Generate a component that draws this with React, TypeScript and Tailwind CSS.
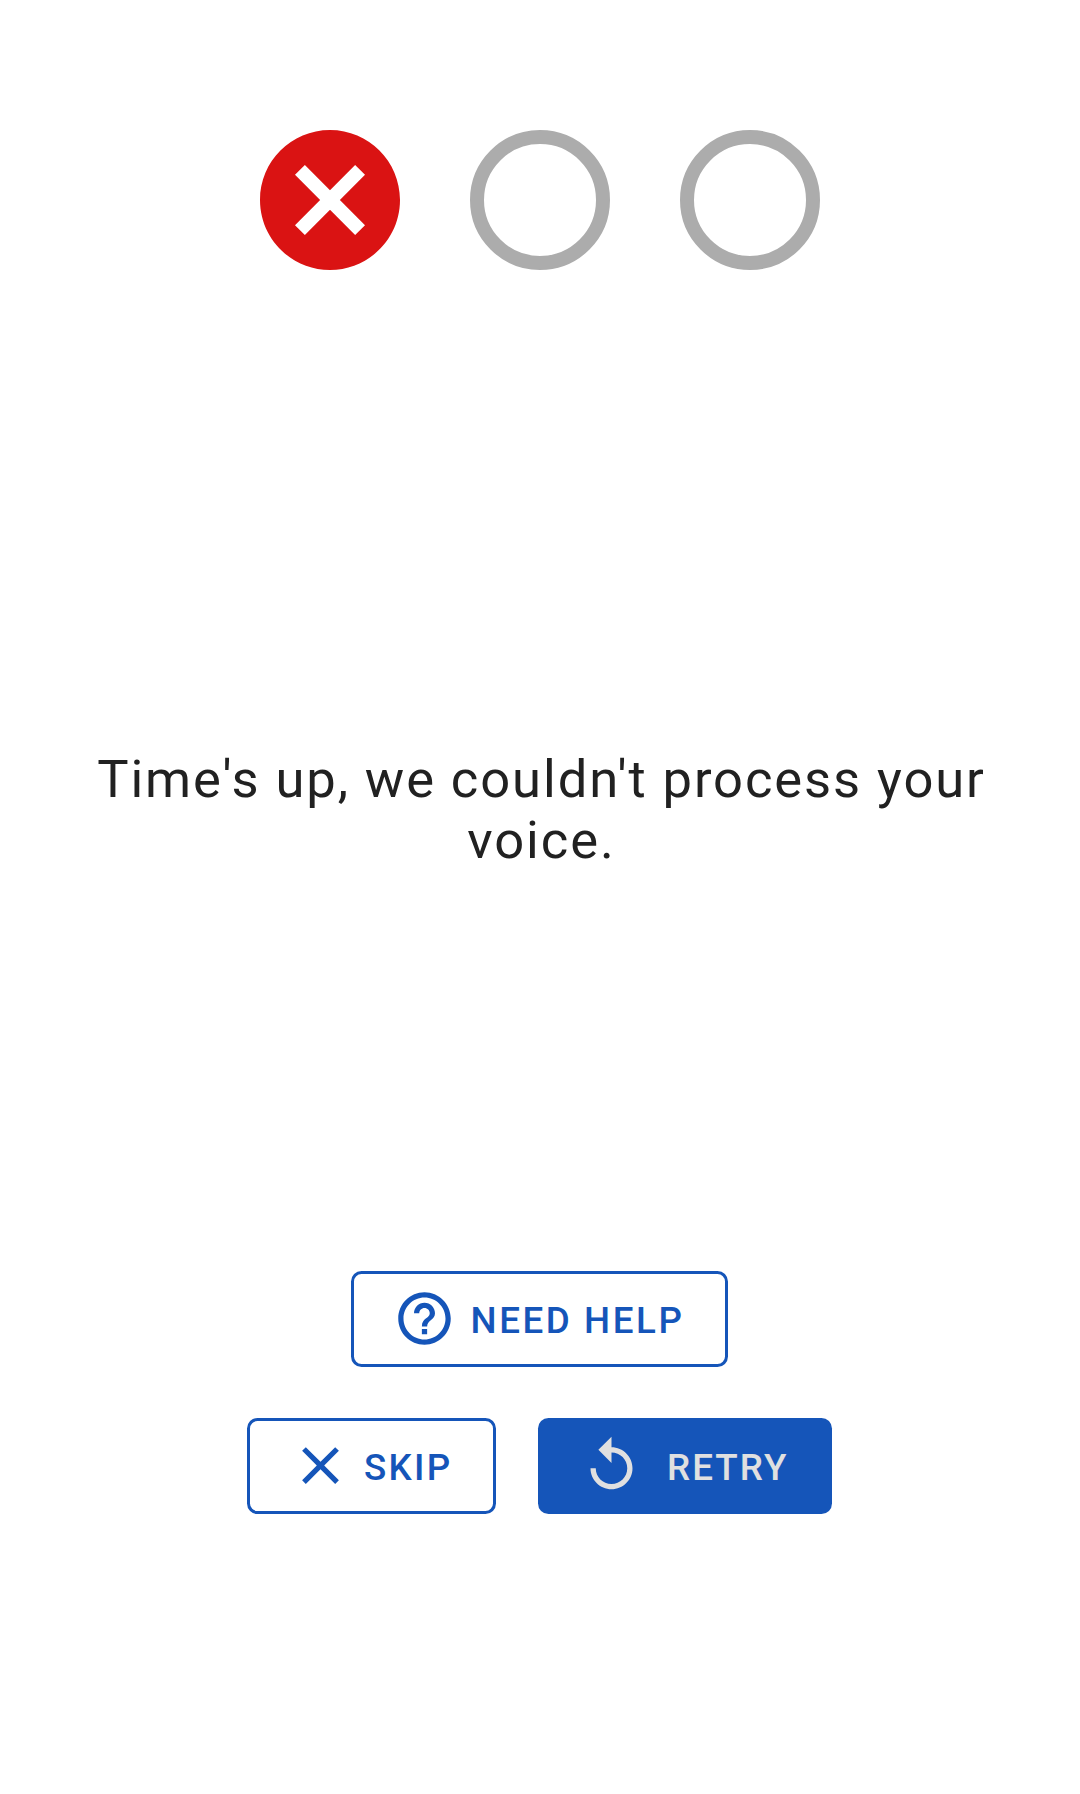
import type { ReactNode } from "react";

const HELP =
  "M11 18h2v-2h-2v2zm1-16C6.48 2 2 6.48 2 12s4.48 10 10 10 10-4.48 10-10S17.52 2 12 2zm0 18c-4.41 0-8-3.59-8-8s3.59-8 8-8 8 3.59 8 8-3.59 8-8 8zm0-14c-2.21 0-4 1.79-4 4h2c0-1.1.9-2 2-2s2 .9 2 2c0 2-3 1.75-3 5h2c0-2.25 3-2.5 3-5 0-2.21-1.79-4-4-4z";
const CLOSE =
  "M19 6.41L17.59 5 12 10.59 6.41 5 5 6.41 10.59 12 5 17.59 6.41 19 12 13.41 17.59 19 19 17.59 13.41 12z";
const REPLAY =
  "M12 5V1L7 6l5 5V7c3.31 0 6 2.69 6 6s-2.69 6-6 6-6-2.69-6-6H4c0 4.42 3.58 8 8 8s8-3.58 8-8-3.58-8-8-8z";
const CANCEL =
  "M12 2C6.47 2 2 6.47 2 12s4.47 10 10 10 10-4.47 10-10S17.53 2 12 2zm5 13.59L15.59 17 12 13.41 8.41 17 7 15.59 10.59 12 7 8.41 8.41 7 12 10.59 15.59 7 17 8.41 13.41 12 17 15.59z";

function ButtonIcon({ d }: { d: string }) {
  return (
    <svg viewBox="0 0 24 24" className="mb-px size-[63px] shrink-0" fill="currentColor" aria-hidden="true">
      <path d={d} />
    </svg>
  );
}

function ActionButton({ className, children }: { className: string; children: ReactNode }) {
  return (
    <button
      type="button"
      className={`flex h-24 items-center rounded-[10.5px] text-[36.75px] leading-[43px] font-medium whitespace-nowrap ${className}`}
    >
      {children}
    </button>
  );
}

export default function App() {
  return (
    <main className="flex h-[1794px] w-[1080px] flex-col items-center overflow-hidden bg-white pt-[130px] font-[Roboto,sans-serif]">
      <div className="flex h-[140px] shrink-0 gap-[70px]">
        <svg viewBox="2 2 20 20" className="size-[140px] text-[#da1313]" fill="currentColor" role="img" aria-label="Failed attempt">
          <path d={CANCEL} />
        </svg>
        <div className="size-[140px] rounded-full border-[14px] border-[#acacac]" />
        <div className="size-[140px] rounded-full border-[14px] border-[#acacac]" />
      </div>

      <p className="mt-[479px] ml-[3px] w-[960px] text-center text-[52.5px] leading-[61px] tracking-[1.91px] text-[#212121]">
        Time's up, we couldn't process your voice.
      </p>

      <div className="mt-[400px] mr-px flex flex-col items-center gap-[51px]">
        <ActionButton className="w-[377px] border-3 border-[#1555b9] pl-[39px] tracking-[2.58px] text-[#1555b9]">
          <ButtonIcon d={HELP} />
          <span className="ml-[14.5px] pt-[3px]">NEED HELP</span>
        </ActionButton>
        <div className="flex gap-[42px]">
          <ActionButton className="w-[249px] border-3 border-[#1555b9] pl-[39px] tracking-[2.25px] text-[#1555b9]">
            <ButtonIcon d={CLOSE} />
            <span className="ml-3 pt-[3px]">SKIP</span>
          </ActionButton>
          <ActionButton className="w-[294px] bg-[#1555b9] pl-[42px] tracking-[2px] text-[#e0e0e0]">
            <ButtonIcon d={REPLAY} />
            <span className="ml-[24px] pt-[3px]">RETRY</span>
          </ActionButton>
        </div>
      </div>
    </main>
  );
}
